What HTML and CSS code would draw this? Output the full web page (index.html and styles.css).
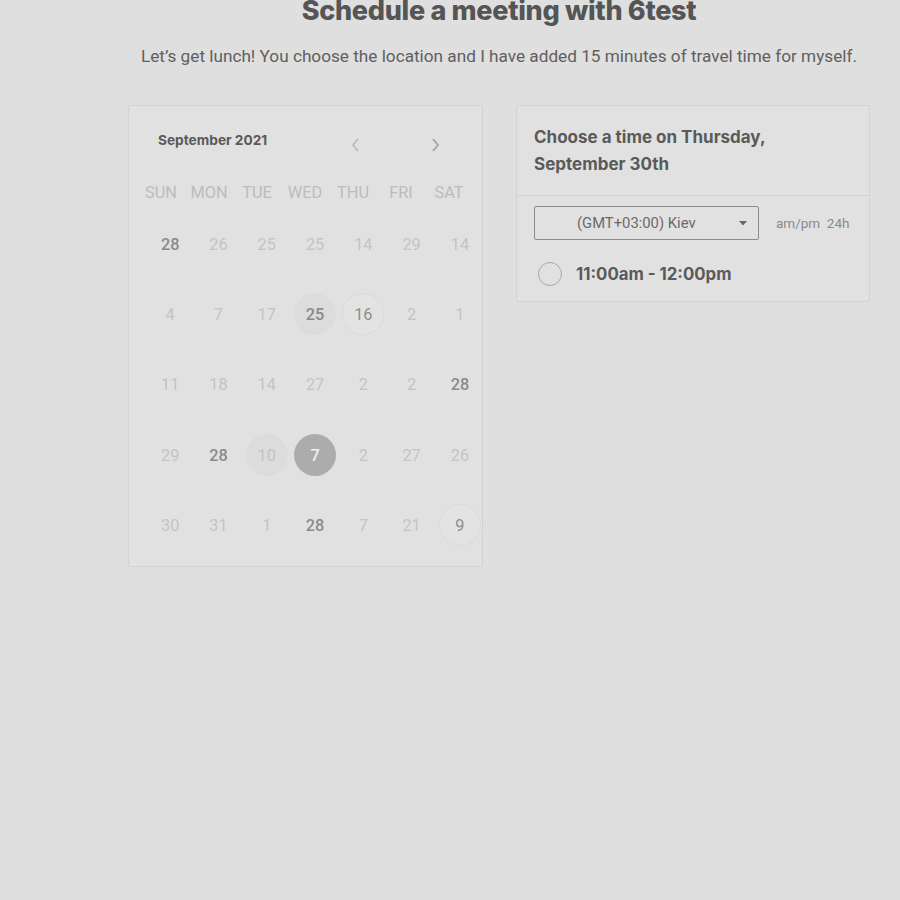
FILE: index.html
```html
<!DOCTYPE html>
<html>
<head>
<meta charset="utf-8">
<link rel="stylesheet" href="styles.css">
</head>
<body>
<header class="head">
  <h1 class="title">Schedule a meeting with 6test</h1>
  <p class="sub">Let’s get lunch! You choose the location and I have added 15 minutes of travel time for myself.</p>
</header>
<main class="main">
  <section class="cal">
    <div class="cal-head">
      <span class="month">September 2021</span>
      <span class="nav">
        <svg class="arrow" width="12" height="16" viewBox="0 0 12 16"><path d="M8 2 L3 8 L8 14" fill="none" stroke="#b8b8b8" stroke-width="1.6"/></svg>
        <svg class="arrow" width="12" height="16" viewBox="0 0 12 16"><path d="M4 2 L9 8 L4 14" fill="none" stroke="#a0a0a0" stroke-width="1.6"/></svg>
      </span>
    </div>
    <div class="dow">
      <span>SUN</span><span>MON</span><span>TUE</span><span>WED</span><span>THU</span><span>FRI</span><span>SAT</span>
    </div>
    <div class="dates">
      <span class="d b">28</span><span class="d">26</span><span class="d">25</span><span class="d">25</span><span class="d">14</span><span class="d">29</span><span class="d">14</span>
      <span class="d">4</span><span class="d">7</span><span class="d">17</span><span class="d b"><i class="c soft">25</i></span><span class="d"><i class="c tex">16</i></span><span class="d">2</span><span class="d">1</span>
      <span class="d">11</span><span class="d">18</span><span class="d">14</span><span class="d">27</span><span class="d">2</span><span class="d">2</span><span class="d b">28</span>
      <span class="d">29</span><span class="d b">28</span><span class="d"><i class="c soft">10</i></span><span class="d"><i class="c sel">7</i></span><span class="d">2</span><span class="d">27</span><span class="d">26</span>
      <span class="d">30</span><span class="d">31</span><span class="d">1</span><span class="d b">28</span><span class="d">7</span><span class="d">21</span><span class="d"><i class="c tex">9</i></span>
    </div>
  </section>
  <section class="times">
    <h2 class="times-head">Choose a time on Thursday,<br>September 30th</h2>
    <div class="times-body">
      <div class="tz-row">
        <div class="select">
          <span class="select-text">(GMT+03:00) Kiev</span>
          <svg class="caret" width="8" height="5" viewBox="0 0 8 5"><path d="M0 0 H8 L4 4.5 Z" fill="#666"/></svg>
        </div>
        <span class="fmt">am/pm&nbsp; 24h</span>
      </div>
      <div class="slot">
        <span class="radio"></span>
        <span class="slot-text">11:00am - 12:00pm</span>
      </div>
    </div>
  </section>
</main>
</body>
</html>
```
FILE: styles.css
```css
html, body {
  margin: 0;
  padding: 0;
  background: #dfdfdf;
}
body {
  font-family: Roboto, "Liberation Sans", sans-serif;
  color: #555;
  width: 900px;
  height: 900px;
  overflow: hidden;
}
.head {
  text-align: center;
  padding-left: 98px;
}
.title {
  margin: -7px 0 0;
  font-family: Inter, "Liberation Sans", sans-serif;
  font-weight: 800;
  font-size: 27px;
  line-height: 36px;
  color: #555;
  letter-spacing: -0.3px;
}
.sub {
  margin: 17px 0 0;
  font-size: 17.2px;
  line-height: 20px;
  color: #606060;
}
.main {
  display: flex;
  align-items: flex-start;
  gap: 33px;
  padding-left: 128px;
  margin-top: 39px;
}
.cal {
  width: 353px;
  height: 440px;
  border: 1px solid #d2d2d2;
  border-radius: 2px;
  background: #e1e1e1;
  padding-top: 20px;
  box-sizing: content-box;
}
.cal-head {
  display: flex;
  align-items: center;
  height: 30px;
  padding-left: 29px;
}
.month {
  font-family: Inter, "Liberation Sans", sans-serif;
  font-weight: 700;
  font-size: 13.7px;
  color: #5a5a5a;
  width: 190px;
  margin-top: -2px;
}
.nav {
  display: flex;
  gap: 67px;
  margin-top: 8px;
  margin-left: 2px;
}
.arrow {
  display: block;
}
.dow {
  display: grid;
  grid-template-columns: repeat(7, 48px);
  margin-left: 8px;
  margin-top: 20px;
  height: 32px;
  align-items: center;
  font-size: 16.3px;
  color: #bcbcbc;
  text-align: center;
}
.dates {
  display: grid;
  grid-template-columns: repeat(7, 48.3px);
  grid-auto-rows: 70.3px;
  margin-left: 17px;
  margin-top: 1px;
}
.d {
  display: flex;
  align-items: center;
  justify-content: center;
  font-size: 16.3px;
  color: #c4c4c4;
}
.d.b {
  color: #8a8a8a;
  font-weight: 500;
}
.c {
  font-style: normal;
  width: 42px;
  height: 42px;
  border-radius: 50%;
  display: flex;
  align-items: center;
  justify-content: center;
}
.c.soft {
  background: #dcdcdc;
}
.c.tex {
  background: #e3e3e3;
  box-shadow: inset 0 0 0 1px #dadada;
  color: #8e8e8e;
}
.c.sel {
  background: #acacac;
  color: #f0f0f0;
  font-weight: 500;
}
.times {
  width: 352px;
  border: 1px solid #d2d2d2;
  border-radius: 2px;
  background: #e1e1e1;
}
.times-head {
  margin: 0;
  padding: 18px 17px 17px;
  font-family: Inter, "Liberation Sans", sans-serif;
  font-weight: 700;
  font-size: 17px;
  line-height: 27px;
  color: #5a5a5a;
  border-bottom: 1px solid #d2d2d2;
}
.times-body {
  padding: 10px 0 0 17px;
  height: 105px;
  box-sizing: border-box;
}
.tz-row {
  display: flex;
  align-items: center;
}
.select {
  width: 225px;
  height: 34px;
  border: 1px solid #8c8c8c;
  border-radius: 2px;
  display: flex;
  align-items: center;
  box-sizing: border-box;
}
.select-text {
  font-size: 14.8px;
  color: #6a6a6a;
  margin-left: 42px;
}
.caret {
  margin-left: auto;
  margin-right: 11px;
}
.fmt {
  margin-left: 17px;
  font-size: 13.5px;
  color: #8a8a8a;
}
.slot {
  display: flex;
  align-items: center;
  margin-top: 22px;
}
.radio {
  width: 22px;
  height: 22px;
  border: 1.5px solid #a8a8a8;
  border-radius: 50%;
  margin-left: 4px;
}
.slot-text {
  margin-left: 14px;
  font-family: Inter, "Liberation Sans", sans-serif;
  font-weight: 700;
  font-size: 16.8px;
  color: #5a5a5a;
}
```
